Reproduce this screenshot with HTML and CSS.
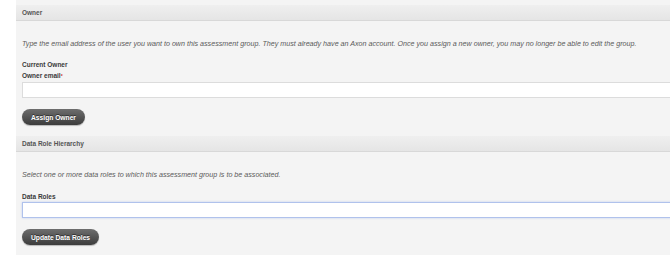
FILE: index.html
```html
<!DOCTYPE html>
<html lang="en">
<head>
    <meta charset="UTF-8">
    <title>Assessment Group</title>
    <link rel="stylesheet" href="styles.css">
</head>
<body>
    <div class="panel">
        <div class="section-head">Owner</div>
        <div class="section-body">
            <p class="hint">Type the email address of the user you want to own this assessment group. They must already have an Axon account. Once you assign a new owner, you may no longer be able to edit the group.</p>
            <div class="label current">Current Owner</div>
            <label class="label" for="owner-email">Owner email<span class="req">*</span></label>
            <input class="field" id="owner-email" type="text">
            <button class="btn">Assign Owner</button>
        </div>

        <div class="section-head">Data Role Hierarchy</div>
        <div class="section-body last">
            <p class="hint">Select one or more data roles to which this assessment group is to be associated.</p>
            <label class="label roles" for="data-roles">Data Roles</label>
            <input class="field focused" id="data-roles" type="text">
            <button class="btn">Update Data Roles</button>
        </div>
    </div>
</body>
</html>
```

FILE: styles.css
```css
body {
    margin: 0;
    background: #ffffff;
    font-family: "Liberation Sans", Arial, Helvetica, sans-serif;
    font-size: 6.5px;
    color: #333;
    overflow: hidden;
}
.panel {
    margin-left: 16px;
    padding-top: 5px;
    padding-bottom: 10px;
    background: #f4f4f4;
    width: 680px;
}
.section-head {
    height: 15px;
    line-height: 15px;
    padding-left: 6px;
    font-weight: bold;
    color: #555;
    background: linear-gradient(#efefef, #e5e5e5);
    border-bottom: 1px solid #d8d8d8;
}
.section-body {
    padding: 18px 0 11px 6px;
}
.section-body.last {
    padding-bottom: 0;
}
.hint {
    margin: 0;
    height: 10px;
    line-height: 10px;
    font-size: 7.15px;
    font-style: italic;
    color: #5a5a5a;
}
.label {
    display: block;
    height: 10px;
    line-height: 10px;
    font-weight: bold;
    color: #3a3a3a;
    margin-top: 1px;
}
.label.current {
    margin-top: 11px;
}
.label.roles {
    margin-top: 12px;
}
.req {
    color: #c33;
    font-size: 5px;
    vertical-align: top;
}
.field {
    display: block;
    box-sizing: border-box;
    width: 100%;
    height: 16px;
    margin: 1px 0 0 0;
    padding: 0 4px;
    border: 1px solid #dcdcdc;
    background: #ffffff;
    font: inherit;
}
.field.focused {
    margin-top: 0;
    border-color: #b0c2ec;
    box-shadow: 0 0 2px #c2d0f2;
}
.btn {
    display: block;
    height: 16px;
    margin-top: 11px;
    padding: 0 9px;
    border: none;
    border-radius: 8px;
    background: linear-gradient(#6e6e6e, #3c3c3c);
    box-shadow: 0 1px 1px rgba(0,0,0,0.25);
    color: #fff;
    font-family: inherit;
    font-size: 6.7px;
    font-weight: bold;
    text-shadow: 0 -1px 0 rgba(0,0,0,0.5);
}
```
